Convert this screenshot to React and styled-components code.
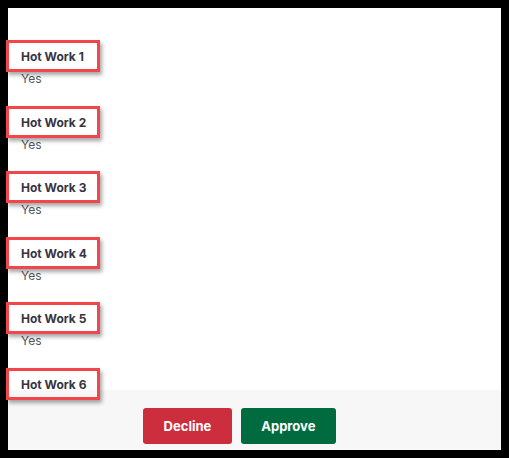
import React from 'react'
import styled, { createGlobalStyle } from 'styled-components'

const GlobalStyle = createGlobalStyle`
  html, body {
    margin: 0;
    padding: 0;
    background: #000;
  }
  body {
    font-family: Inter, "Noto Sans", Arial, sans-serif;
  }
`

const items = [1, 2, 3, 4, 5, 6].map((n) => ({ label: `Hot Work ${n}`, value: 'Yes' }))

function App() {
  return (
    <>
      <GlobalStyle />
      <Frame>
        <Panel>
          <FieldList>
            {items.map((item) => (
              <Field key={item.label}>
                <Label>{item.label}</Label>
                <Value>{item.value}</Value>
              </Field>
            ))}
          </FieldList>
          <Footer>
            <ActionButton $variant="decline">Decline</ActionButton>
            <ActionButton $variant="approve">Approve</ActionButton>
          </Footer>
        </Panel>
      </Frame>
    </>
  )
}

export default App

const Frame = styled.div`
  width: 509px;
  height: 458px;
  box-sizing: border-box;
  padding: 8px;
  background: #000;
`

const Panel = styled.div`
  width: 493px;
  height: 442px;
  background: #fff;
  display: flex;
  flex-direction: column;
`

const FieldList = styled.div`
  height: 382px;
  flex-shrink: 0;
  box-sizing: border-box;
  padding: 39px 0 0 13px;
  display: flex;
  flex-direction: column;
  gap: 23.5px;
`

const Field = styled.div`
  display: flex;
  flex-direction: column;
`

const Label = styled.span`
  position: relative;
  font-size: 12px;
  line-height: 20px;
  font-weight: 700;
  color: #35353f;

  &::after {
    content: '';
    position: absolute;
    z-index: 2;
    left: -15px;
    top: -7px;
    width: 88px;
    height: 26px;
    border: 3px solid #f2464b;
    box-shadow: 2px 3px 4px rgba(0, 0, 0, 0.35);
  }
`

const Value = styled.span`
  margin-top: 2px;
  font-size: 12px;
  line-height: 20px;
  color: #55555e;
`

const Footer = styled.div`
  position: relative;
  z-index: 1;
  flex: 1;
  background: #f7f7f7;
  display: flex;
  justify-content: center;
  align-items: flex-start;
  gap: 9px;
  padding: 18px 30px 0 0;
`

const ActionButton = styled.button`
  height: 36px;
  padding: 0 20.5px;
  border: none;
  border-radius: 3px;
  font-family: inherit;
  font-size: 13px;
  font-weight: 700;
  color: #fff;
  background: ${(p) => (p.$variant === 'approve' ? '#006b3f' : '#cc2e3d')};
  cursor: pointer;
`
